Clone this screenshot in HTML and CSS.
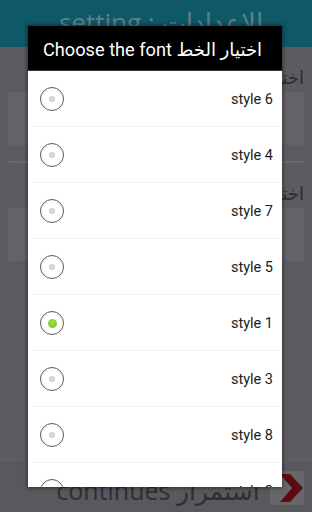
FILE: index.html
```html
<!DOCTYPE html>
<html lang="en">
<head>
<meta charset="utf-8">
<link rel="stylesheet" href="styles.css">
</head>
<body>
<div class="screen">
  <header class="appbar"><span class="apptitle">setting : الاعدادات</span></header>
  <main class="content">
    <div class="label">اختيار الخط</div>
    <div class="field"></div>
    <div class="rule"></div>
    <div class="label">اختيار اللون</div>
    <div class="field"></div>
  </main>
  <footer class="footer">
    <span class="continue">continues استمرار</span>
    <span class="next"><svg width="34" height="34" viewBox="0 0 34 34"><path d="M10 3 L20 3 L33 17 L20 31 L10 31 L22 17 Z" fill="#5c0a12"/></svg></span>
  </footer>

  <div class="dialog">
    <div class="dtitle">Choose the font اختيار الخط</div>
    <ul class="list">
      <li class="row"><span class="radio"></span><span class="name">style 6</span></li>
      <li class="row"><span class="radio"></span><span class="name">style 4</span></li>
      <li class="row"><span class="radio"></span><span class="name">style 7</span></li>
      <li class="row"><span class="radio"></span><span class="name">style 5</span></li>
      <li class="row"><span class="radio on"></span><span class="name">style 1</span></li>
      <li class="row"><span class="radio"></span><span class="name">style 3</span></li>
      <li class="row"><span class="radio"></span><span class="name">style 8</span></li>
      <li class="row"><span class="radio"></span><span class="name">style 2</span></li>
    </ul>
  </div>
</div>
</body>
</html>
```
FILE: styles.css
```css
* { box-sizing: border-box; }
html, body { margin: 0; padding: 0; }
body { width: 312px; height: 512px; overflow: hidden; background: #5b5b60; font-family: Roboto, "Noto Sans", "DejaVu Sans", sans-serif; }
.screen { position: relative; width: 312px; height: 512px; display: flex; flex-direction: column; }
.appbar { height: 47px; background: #0e5868; display: flex; justify-content: center; align-items: flex-start; overflow: hidden; padding-top: 9px; }
.apptitle { font-family: "Open Sans", "DejaVu Sans", sans-serif; font-size: 26px; color: #5e7f88; line-height: 1; white-space: nowrap; margin-left: 10px; }
.content { flex: 1; padding: 18px 8px 0; display: flex; flex-direction: column; }
.label { text-align: right; font-family: "DejaVu Sans", sans-serif; font-size: 18px; color: #2b2b30; height: 25px; line-height: 25px; white-space: nowrap; overflow: hidden; direction: rtl; }
.field { height: 53px; background: #626267; margin-top: 2px; }
.rule { height: 2px; background: #68686d; margin: 16px 0 18px; }
.footer { height: 52px; border-top: 1px solid #616166; background: #58585d; display: flex; align-items: center; justify-content: center; position: relative; }
.continue { font-family: "Open Sans", "DejaVu Sans", sans-serif; font-size: 25px; color: #2e2e33; line-height: 1; white-space: nowrap; margin-top: 8px; margin-left: 4px; }
.next { position: absolute; right: 8px; top: 10px; width: 34px; height: 34px; background: #67676b; display: flex; }
.dialog { position: absolute; left: 28px; top: 26px; width: 254px; height: 461px; background: #fff; overflow: hidden; box-shadow: 0 0 4px 1px rgba(0,0,0,.45); }
.dtitle { height: 45px; background: #000; color: #fff; font-size: 18.2px; line-height: 47px; padding-left: 15px; white-space: nowrap; border-bottom: 1px solid #333; }
.list { list-style: none; margin: 0; padding: 0; }
.row { height: 56px; display: flex; align-items: center; justify-content: space-between; padding: 0 9px 0 12px; position: relative; }
.row::after { content: ""; position: absolute; left: 4px; right: 4px; bottom: 0; height: 1px; background: #f1f1f1; }
.radio { width: 24px; height: 24px; border-radius: 50%; border: 1.5px solid #5a5a5a; background: radial-gradient(circle, #fff 0, #fff 55%, #f3f3f3 100%); display: flex; align-items: center; justify-content: center; }
.radio::before { content: ""; width: 6px; height: 6px; border-radius: 50%; background: radial-gradient(circle at 50% 40%, #e4e4e4, #bdbdbd); }
.radio.on::before { width: 9px; height: 9px; background: radial-gradient(circle at 50% 40%, #9ee04a, #6cc41c); }
.name { font-size: 14.5px; color: #1c1c1c; }
```
